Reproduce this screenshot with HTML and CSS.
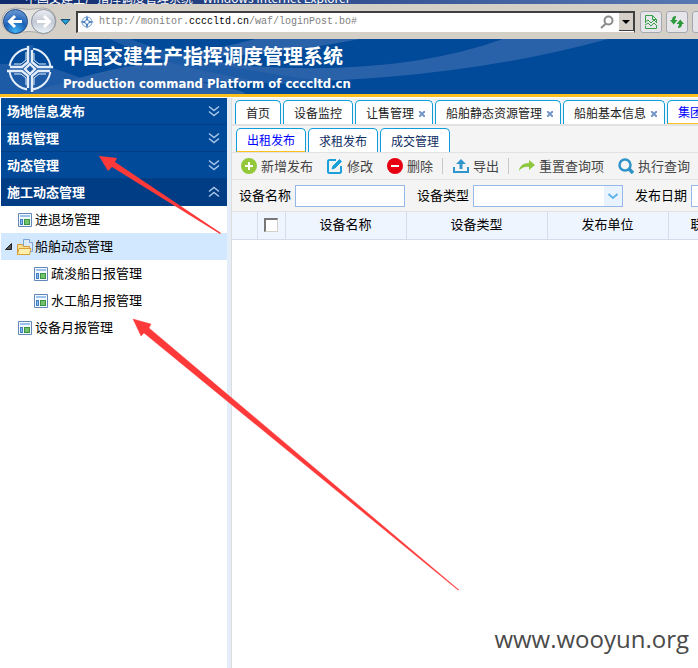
FILE: index.html
```html
<!DOCTYPE html>
<html lang="zh-CN">
<head>
<meta charset="utf-8">
<title>中国交建生产指挥调度管理系统</title>
<link rel="stylesheet" href="styles.css">
</head>
<body>
<svg class="defs" aria-hidden="true">
  <symbol id="down" viewBox="0 0 12 12"><path d="M1 1.500l5 4 5-4M1 6.500l5 4 5-4" fill="none" stroke="#a9c6e8" stroke-width="1.500"/></symbol>
  <symbol id="up" viewBox="0 0 12 12"><path d="M1 5.500l5-4 5 4M1 10.500l5-4 5 4" fill="none" stroke="#a9c6e8" stroke-width="1.500"/></symbol>
  <symbol id="page" viewBox="0 0 14 14">
    <path d="M.5.5h13v13H.5z" fill="#f4f9ff" stroke="#6387b8"/>
    <path d="M2 2h10v2H2z" fill="#9cc3ef"/>
    <path d="M2 6h3v6H2z" fill="#3f7fc6"/><path d="M3 7h1v4H3z" fill="#8dbaec"/>
    <path d="M6 6h6v6H6z" fill="#3b9444"/><path d="M7 7h4v4H7z" fill="#71c26b"/>
  </symbol>
  <symbol id="star" viewBox="0 0 48 48">
    <circle cx="24" cy="24" r="20.500" fill="none" stroke="currentColor" stroke-width="2"/>
    <path class="star-gap" d="M21 0h6v16l5 5h16v6H32l-5 5v16h-6V32l-5-5H0v-6h16l5-5z" />
    <g fill="none" stroke="currentColor" stroke-width="2.400">
      <path d="M22 1v16l-6 5H7M26 9v8l6 5h15M41 26h-9l-6 5v16M22 40v-9l-6-5H1"/>
      <path d="M26 9V5M7 22H4M22 40v3M41 26h3M24 19l5 5-5 5-5-5z"/>
      <path d="M20 7v8l-5 4H8M28 8v7l5 4h7M40 29h-7l-5 4v7M20 40v-7l-5-4H8" stroke-width="1"/>
    </g>
  </symbol>
  <symbol id="compass" viewBox="0 0 14 14">
    <circle cx="7" cy="7" r="5" fill="none" stroke="#6f9bcb"/>
    <path d="M7 0l1.500 5.500L14 7 8.500 8.500 7 14 5.500 8.500 0 7l5.500-1.500z" fill="#4a80bd"/>
    <path d="M7 5l2 2-2 2-2-2z" fill="#fff"/>
  </symbol>
</svg>

<div class="titlebar"><span>中国交建生产指挥调度管理系统 - Windows Internet Explorer</span></div>

<div class="browser">
  <svg class="nav" width="76" height="35" viewBox="0 4 76 35" role="img" aria-label="后退 前进">
    <defs>
      <radialGradient id="gb" cx=".5" cy=".9" r=".9"><stop offset="0" stop-color="#41b4f2"/><stop offset=".5" stop-color="#1c60b8"/><stop offset="1" stop-color="#6f9cd4"/></radialGradient>
      <linearGradient id="gf" x2="0" y2="1"><stop offset="0" stop-color="#eceff4"/><stop offset=".5" stop-color="#c3c9d4"/><stop offset="1" stop-color="#edf3fa"/></linearGradient>
    </defs>
    <path d="M15 8q14 3 28 0a13 13 0 0 1 0 26q-14-5-28 0a13 13 0 0 1 0-26z" fill="#e3e2df" stroke="#aaa9a5"/>
    <circle cx="15.500" cy="21.500" r="12" fill="url(#gb)" stroke="#234b86"/>
    <circle cx="43.500" cy="21.500" r="12" fill="url(#gf)" stroke="#8d939e"/>
    <path d="M22 21.500H10M15 16l-5.500 5.500L15 27" fill="none" stroke="#fff" stroke-width="3"/>
    <path d="M37 21.500h12M44 16l5.500 5.500L44 27" fill="none" stroke="#fff" stroke-width="3"/>
    <path d="M61 19.500h9L65.500 24.500z" fill="#25a0d4" stroke="#174a74"/>
  </svg>
  <div class="address">
    <svg width="14" height="14"><use href="#compass"/></svg>
    <span class="url">http://monitor.<b>ccccltd.cn</b>/waf/loginPost.bo#</span>
    <svg width="14" height="14" viewBox="0 0 14 14"><circle cx="8.500" cy="5.500" r="4" fill="none" stroke="#8a8a8a" stroke-width="2"/><path d="M6 8.500L1 13" stroke="#8a8a8a" stroke-width="2"/></svg>
    <button class="drop" aria-label="历史"><svg width="8" height="4"><path d="M0 0h8L4 4z"/></svg></button>
  </div>
  <button class="tool" aria-label="兼容性视图"><svg width="12" height="14" viewBox="0 0 12 14" fill="none" stroke="#36a046"><path d="M.5 8V.5h7l4 4V8M7.500.5v4h4M.5 11v2.500h11V11"/><path d="M0 7l3-2 3 3 3-3 3 3M0 10l3-2 3 3 3-3 3 3"/></svg></button>
  <button class="tool" aria-label="刷新"><svg width="14" height="14" viewBox="0 0 14 14" fill="#2c9a3c"><path d="M6 1v1.500Q5 3 5 5h2.500L3.700 9.500 0 5h2Q2 1 6 1zM8 13v-1.500q1 0 1-2.500H6.500l3.800-4.500L14 9h-2q0 4-4 4z"/></svg></button>
  <button class="tool" aria-label="停止"></button>
</div>

<header class="banner">
  <svg class="swoosh" viewBox="0 39 698 55" preserveAspectRatio="xMinYMin slice" aria-hidden="true">
    <path d="M0 64Q40 62 70 74T160 94H0z" fill="#1e5ba6"/>
    <path d="M105 58Q230 64 360 39H255Q170 62 80 60z" fill="#2a62a9"/>
    <path d="M60 84Q160 50 250 66Q400 76 503 39H608Q430 88 200 82Q260 94 240 94H20z" fill="#2a62a9"/>
    <path d="M130 39Q200 66 330 82L300 86Q180 74 110 39z" fill="#1e5ba6"/>
  </svg>
  <svg class="logo" width="48" height="48"><use href="#star"/></svg>
  <div class="names">
    <h1>中国交建生产指挥调度管理系统</h1>
    <p>Production command Platform of ccccltd.cn</p>
  </div>
</header>

<div class="workspace">
  <nav class="sidebar">
    <button class="group">场地信息发布<svg width="12" height="12"><use href="#down"/></svg></button>
    <button class="group">租赁管理<svg width="12" height="12"><use href="#down"/></svg></button>
    <button class="group">动态管理<svg width="12" height="12"><use href="#down"/></svg></button>
    <button class="group open">施工动态管理<svg width="12" height="12"><use href="#up"/></svg></button>
    <ul class="tree">
      <li><a href="#"><svg width="14" height="14"><use href="#page"/></svg><span>进退场管理</span></a></li>
      <li>
        <a href="#" class="branch">
          <svg width="7" height="7" viewBox="0 0 7 7"><path d="M6.500.5v6h-6z" fill="#555" stroke="#222"/></svg>
          <svg width="16" height="16" viewBox="0 0 16 16"><path d="M6.500.5h6l3 3v9h-9z" fill="#dcebfb" stroke="#7ba4d6"/><path d="M12.500.5v3h3" fill="#fff" stroke="#7ba4d6"/><path d="M.5 15.500v-10h5l1 2h6v8z" fill="#fbe093" stroke="#d19b3c"/><path d="M2 9.500h12l-1.500 6H.5z" fill="#fff0ae" stroke="#d8a13c"/></svg><span>船舶动态管理</span></a>
        <ul>
          <li><a href="#"><svg width="14" height="14"><use href="#page"/></svg><span>疏浚船日报管理</span></a></li>
          <li><a href="#"><svg width="14" height="14"><use href="#page"/></svg><span>水工船月报管理</span></a></li>
        </ul>
      </li>
      <li><a href="#"><svg width="14" height="14"><use href="#page"/></svg><span>设备月报管理</span></a></li>
    </ul>
  </nav>

  <main class="main">
    <div class="tabs pages">
      <button>首页</button>
      <button>设备监控</button>
      <button>让售管理<svg class="close" width="6" height="6" viewBox="0 0 6 6"><path d="M0 0l6 6M6 0L0 6"/></svg></button>
      <button>船舶静态资源管理<svg class="close" width="6" height="6" viewBox="0 0 6 6"><path d="M0 0l6 6M6 0L0 6"/></svg></button>
      <button>船舶基本信息<svg class="close" width="6" height="6" viewBox="0 0 6 6"><path d="M0 0l6 6M6 0L0 6"/></svg></button>
      <button class="active">集团</button>
    </div>
    <div class="tabs sections">
      <button class="active">出租发布</button>
      <button>求租发布</button>
      <button>成交管理</button>
    </div>
    <div class="toolbar">
      <button><svg width="16" height="16" viewBox="0 0 16 16"><circle cx="8" cy="8" r="8" fill="#93c83a"/><path d="M8 4v8M4 8h8" stroke="#fff" stroke-width="2"/></svg>新增发布</button>
      <button><svg width="16" height="16" viewBox="0 0 16 16" fill="none" stroke="#1ba0d8" stroke-width="2"><path d="M9 2H2.500Q1 2 1 3.500v10Q1 15 2.500 15h10q1.500 0 1.500-1.500V8"/><path d="M5 11l1-3 6.500-6.500 2 2L8 10z" fill="#1ba0d8" stroke-width="1"/></svg>修改</button>
      <button><svg width="16" height="16" viewBox="0 0 16 16"><circle cx="8" cy="8" r="8" fill="#e60012"/><path d="M4 8h8" stroke="#fff" stroke-width="2"/></svg>删除</button>
      <span class="sep"></span>
      <button><svg width="16" height="16" viewBox="0 0 16 16"><path d="M1 9v5h14V9" fill="none" stroke="#3095cc" stroke-width="2"/><path d="M8 1l5 5H9.500v5h-3V6H3z" fill="#3095cc"/></svg>导出</button>
      <span class="sep"></span>
      <button><svg width="16" height="16" viewBox="0 0 16 16"><path d="M10 2l6 5-6 5V9Q4 8 0 13 1 5 10 5z" fill="#8dc63f"/></svg>重置查询项</button>
      <button><svg width="16" height="16" viewBox="0 0 16 16" fill="none" stroke="#2e93c9"><circle cx="7" cy="7" r="5.500" stroke-width="2.500"/><path d="M11 11l4 4" stroke-width="3.500"/></svg>执行查询</button>
    </div>
    <form class="filters">
      <label for="name">设备名称</label><input id="name" type="text">
      <label for="type">设备类型</label>
      <span class="combo"><select id="type"><option></option></select><svg width="18" height="20" viewBox="0 0 18 20"><path d="M0 0h18v20H0z" fill="#e8f3ff"/><path d="M4.500 8L9 12l4.500-4" fill="none" stroke="#62b4e8" stroke-width="2"/></svg></span>
      <label for="date">发布日期</label><input id="date" type="text">
    </form>
    <table>
      <colgroup><col class="c-num"><col class="c-check"><col class="c-text"><col class="c-wide"><col class="c-text"><col class="c-last"></colgroup>
      <thead><tr><th></th><th><input type="checkbox" aria-label="全选"></th><th>设备名称</th><th>设备类型</th><th>发布单位</th><th>联</th></tr></thead>
    </table>
  </main>
</div>

<svg class="arrows" width="698" height="668" fill="#fd3a39" aria-hidden="true">
  <path d="M99 156l18 2-2 4L221 233l-1 1L112 167l-4 4z"/>
  <path d="M133 319l18 5-2 4L459 590h-1L144 333l-3 3z" stroke="#fd3a39" stroke-width=".4"/>
</svg>
<div class="watermark">www.wooyun.org</div>
</body>
</html>
```
FILE: styles.css
```css
* { box-sizing: border-box; }
body {
  margin: 0;
  min-height: 100vh;
  display: flex;
  flex-direction: column;
  position: relative;
  overflow: hidden;
  background: #fff;
  color: #000;
  font: 13px/20px "Noto Sans CJK SC", sans-serif;
}
button, input, select { font: inherit; color: inherit; margin: 0; }
button { border: 0; padding: 0; background: none; white-space: nowrap; }
svg { flex: none; display: block; }
.defs { position: absolute; width: 0; height: 0; }

.titlebar {
  display: flex;
  align-items: flex-end;
  height: 4px;
  padding-left: 25px;
  overflow: hidden;
  background: linear-gradient(90deg, #0f2a6c, #5878b4);
  color: #fff;
  font-size: 12px;
  line-height: 12px;
}
.browser {
  display: flex;
  align-items: center;
  height: 35px;
  background: #d4d0c8;
  overflow: hidden;
}
.address {
  flex: 1;
  display: flex;
  align-items: center;
  gap: 5px;
  height: 22px;
  min-width: 0;
  padding-left: 2px;
  background: #fff;
  border: 1px solid #404040;
  border-width: 2px 1px 1px 2px;
  border-bottom-color: #d4d0c8;
}
.url {
  flex: 1;
  color: #808080;
  font: 10px/16px "Liberation Mono", monospace;
}
.url b { color: #000; font-weight: normal; }
.drop {
  display: flex;
  align-items: center;
  justify-content: center;
  width: 15px;
  height: 18px;
  background: #d4d0c8;
  border: 1px solid #404040;
  border-width: 0 1px 1px 0;
}
.tool {
  display: flex;
  align-items: center;
  justify-content: center;
  flex: none;
  width: 22px;
  height: 22px;
  margin-left: 4px;
  background: #e6e6ea;
  border: 1px solid #a5a7b0;
  border-radius: 3px;
}
.address + .tool { margin-left: 5px; }
.tool:last-child { margin-right: -16px; }

.banner {
  display: flex;
  gap: 9px;
  height: 58px;
  padding: 4px 6px 0;
  position: relative;
  background: #004a99;
  border-bottom: 3px solid #fdc01c;
  color: #fff;
}
.swoosh { position: absolute; top: 0; left: 0; width: 100%; height: 55px; }
.logo, .names { position: relative; }
.logo { margin-top: 2px; color: #e4eefa; }
.star-gap { fill: #1e5ba6; }
h1, .names p { margin: 0; white-space: nowrap; }
h1 { font-size: 20px; line-height: 26px; font-weight: 700; }
.names p { font: bold 13px/30px "DejaVu Sans Condensed", "Noto Sans", sans-serif; }

.workspace { flex: 1; display: flex; padding-top: 1px; }
.sidebar {
  flex: none;
  width: 231px;
  padding-left: 1px;
  border-right: 4px solid #e3eef8;
}
.group {
  display: flex;
  align-items: center;
  justify-content: space-between;
  width: 100%;
  height: 27px;
  padding: 0 7px 0 6px;
  background: #004a99;
  border-bottom: 1px solid #003f86;
  color: #fff;
  font-weight: 700;
}
.group.open { background: #003d84; }
.tree, .tree ul { list-style: none; margin: 0; padding: 0; }
.tree a {
  display: flex;
  align-items: center;
  gap: 3px;
  height: 27px;
  padding-left: 17px;
  color: #000;
  text-decoration: none;
}
.tree span, .filters label { padding-bottom: 2px; }
.tree a.branch { padding-left: 4px; gap: 5px; background: #d2e8ff; }
.branch svg + svg { margin-right: -3px; }
.tree ul a { padding-left: 33px; }

.main { flex: 1; min-width: 0; overflow: hidden; border-left: 1px solid #ddd; }
.tabs {
  display: flex;
  align-items: flex-end;
  gap: 2px;
  background: #f4f4f4;
}
.pages { height: 28px; padding-left: 3px; border-bottom: 2px solid #e2e2e2; }
.sections { height: 27px; padding-left: 4px; border-bottom: 1px solid #e2e2e2; }
.tabs button {
  display: flex;
  align-items: center;
  flex: none;
  height: 24px;
  padding: 0 10px;
  background: #fff;
  border: 1px solid #0d9ddb;
  border-bottom: 0;
  border-radius: 5px 5px 0 0;
  color: #222;
  font-size: 12px;
}
.sections button { color: #0e2d5f; }
.tabs button.active { color: #00f; border-bottom: 1px solid #fdc01c; }
.close { margin: 2px -3px 0 5px; fill: none; stroke: #7397cb; stroke-width: 2; }

.toolbar, .filters {
  display: flex;
  align-items: center;
  background: #f4f4f4;
  border-bottom: 1px solid #e2e2e2;
  white-space: nowrap;
}
.toolbar { height: 27px; gap: 14px; padding-left: 9px; color: #444; }
.toolbar button { display: flex; align-items: center; gap: 4px; flex: none; }
.sep { flex: none; width: 2px; height: 16px; margin: 0 -5px; border-left: 1px solid #c8c8c8; }
.filters { height: 32px; padding-left: 7px; }
.filters label { flex: none; margin-right: 4px; }
.filters input, .combo {
  flex: none;
  width: 110px;
  height: 22px;
  margin-right: 12px;
  border: 1px solid #95b8e7;
  background: #fff;
}
.combo { display: block; width: 150px; position: relative; }
.combo select {
  width: 100%;
  height: 20px;
  border: 0;
  background: none;
  appearance: none;
}
.combo svg { position: absolute; top: 0; right: 0; pointer-events: none; }

table { width: 100%; table-layout: fixed; border-collapse: collapse; }
th {
  height: 27px;
  padding: 0 0 3px;
  background: #eff5ff;
  border-right: 1px solid #d3dcea;
  border-bottom: 1px solid #d3dcea;
  font-weight: 400;
}
th:last-child { border-right: 0; padding-left: 22px; text-align: left; }
th input {
  display: block;
  appearance: none;
  width: 14px;
  height: 14px;
  margin: 2px auto 0;
  background: #fff;
  border: 1px solid #777;
  border-width: 2px 1px 1px 2px;
  border-right-color: #d4d0c8;
  border-bottom-color: #d4d0c8;
}
.c-num { width: 25px; }
.c-check { width: 28px; }
.c-text { width: 121px; }
.c-wide { width: 141px; }

.arrows { position: absolute; top: 0; left: 0; pointer-events: none; }
.watermark {
  position: absolute;
  right: 9px;
  bottom: 12px;
  color: #4a4a4a;
  font: 24px/34px "Open Sans", sans-serif;
}
```
